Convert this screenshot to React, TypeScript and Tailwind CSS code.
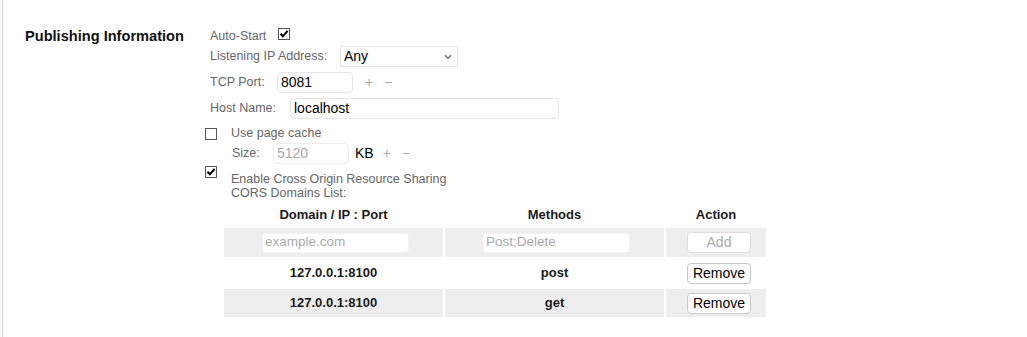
import React from "react";

const Check = ({ checked, className = "" }: { checked: boolean; className?: string }) => (
  <span className={"flex h-[12px] w-[12px] shrink-0 items-center justify-center border border-[#555] bg-white " + className}>
    {checked && (
      <svg width="10" height="10" viewBox="0 0 10 10">
        <path d="M1.5 4.8 L3.9 7.3 L8.6 1.8" fill="none" stroke="#000" strokeWidth="2" />
      </svg>
    )}
  </span>
);

export default function App() {
  return (
    <div className="h-[337px] w-[1027px] overflow-hidden bg-white font-['Liberation_Sans',Arial,sans-serif]">
      <div className="ml-[2px] flex h-full border-l border-[#d4d4d4] pt-[26px]">
        <div className="w-[202px] pl-[22px] text-[14.6px] font-bold leading-[20px] text-[#111]">Publishing Information</div>
        <div className="flex flex-col text-[12.5px] text-[#666]">
          {/* Auto-Start */}
          <div className="flex h-[20px] items-start pl-[5px]">
            <span className="w-[68px] leading-[20px]">Auto-Start</span>
            <Check checked className="mt-[2px]" />
          </div>
          {/* Listening IP */}
          <div className="flex h-[21px] items-center pl-[5px]">
            <span className="w-[130px]">Listening IP Address:</span>
            <div className="flex h-[21px] w-[118px] items-center justify-between border border-[#e3e3e3] pl-[3px] pr-[5px] text-[14px] text-black">
              <span>Any</span>
              <svg width="8" height="6" viewBox="0 0 8 6">
                <path d="M1 1.2 L4 4.4 L7 1.2" fill="none" stroke="#777" strokeWidth="1.6" />
              </svg>
            </div>
          </div>
          {/* TCP Port */}
          <div className="mt-[5px] flex h-[21px] items-center pl-[5px]">
            <span className="w-[67px]">TCP Port:</span>
            <div className="flex h-[21px] w-[76px] items-center rounded-[4px] border border-[#e5e5e5] px-[3px] text-[14px] text-black">8081</div>
            <span className="ml-[12px] text-[14px] text-[#aaa]">+</span>
            <span className="ml-[11px] text-[14px] text-[#aaa]">−</span>
          </div>
          {/* Host Name */}
          <div className="mt-[5px] flex h-[21px] items-center pl-[5px]">
            <span className="w-[80px]">Host Name:</span>
            <div className="flex h-[21px] w-[269px] items-center rounded-[4px] border border-[#e5e5e5] px-[3px] text-[14px] text-black">localhost</div>
          </div>
          {/* Use page cache */}
          <div className="mt-[4px] flex h-[20px] items-start">
            <Check checked={false} className="mt-[5px]" />
            <span className="ml-[14px] leading-[20px]">Use page cache</span>
          </div>
          {/* Size */}
          <div className="flex h-[21px] items-center pl-[27px]">
            <span className="w-[41px]">Size:</span>
            <div className="flex h-[21px] w-[76px] items-center rounded-[4px] border border-[#ececec] px-[3px] text-[14px] text-[#aaa]">5120</div>
            <span className="ml-[6px] text-[14px] text-black">KB</span>
            <span className="ml-[9px] text-[14px] text-[#aaa]">+</span>
            <span className="ml-[11px] text-[14px] text-[#aaa]">−</span>
          </div>
          {/* CORS */}
          <div className="flex items-start">
            <Check checked className="mt-[2px]" />
            <div className="ml-[14px] mt-[8px] leading-[14px]">
              <div>Enable Cross Origin Resource Sharing</div>
              <div>CORS Domains List:</div>
            </div>
          </div>
          {/* Table */}
          <div className="ml-[19px] mt-[3px] grid grid-cols-[219px_219px_100px] gap-[2px] text-[13px] text-[#1a1a1a]">
            <div className="flex h-[23px] items-center justify-center font-bold">Domain / IP : Port</div>
            <div className="flex h-[23px] items-center justify-center font-bold">Methods</div>
            <div className="flex h-[23px] items-center justify-center font-bold">Action</div>

            <div className="flex h-[29px] items-center bg-[#eeeeee] pl-[38px]">
              <div className="flex h-[20px] w-[147px] items-center rounded-[3px] border border-[#f2f2f2] bg-white px-[2px] text-[13.5px] text-[#aaa]">example.com</div>
            </div>
            <div className="flex h-[29px] items-center bg-[#eeeeee] pl-[38px]">
              <div className="flex h-[20px] w-[147px] items-center rounded-[3px] border border-[#f2f2f2] bg-white px-[2px] text-[13.5px] text-[#aaa]">Post;Delete</div>
            </div>
            <div className="flex h-[29px] items-center bg-[#eeeeee] pl-[21px]">
              <div className="flex h-[21px] w-[64px] items-center justify-center rounded-[4px] border border-[#dcdcdc] bg-white text-[14px] text-[#aaa]">Add</div>
            </div>

            <div className="flex h-[28px] items-center justify-center font-bold">127.0.0.1:8100</div>
            <div className="flex h-[28px] items-center justify-center font-bold">post</div>
            <div className="flex h-[28px] items-center pl-[21px]">
              <div className="flex h-[21px] w-[64px] items-center justify-center rounded-[4px] border border-[#c8c8c8] bg-white text-[14px] text-black">Remove</div>
            </div>

            <div className="flex h-[28px] items-center justify-center bg-[#eeeeee] font-bold">127.0.0.1:8100</div>
            <div className="flex h-[28px] items-center justify-center bg-[#eeeeee] font-bold">get</div>
            <div className="flex h-[28px] items-center bg-[#eeeeee] pl-[21px]">
              <div className="flex h-[21px] w-[64px] items-center justify-center rounded-[4px] border border-[#c8c8c8] bg-white text-[14px] text-black">Remove</div>
            </div>
          </div>
        </div>
      </div>
    </div>
  );
}
